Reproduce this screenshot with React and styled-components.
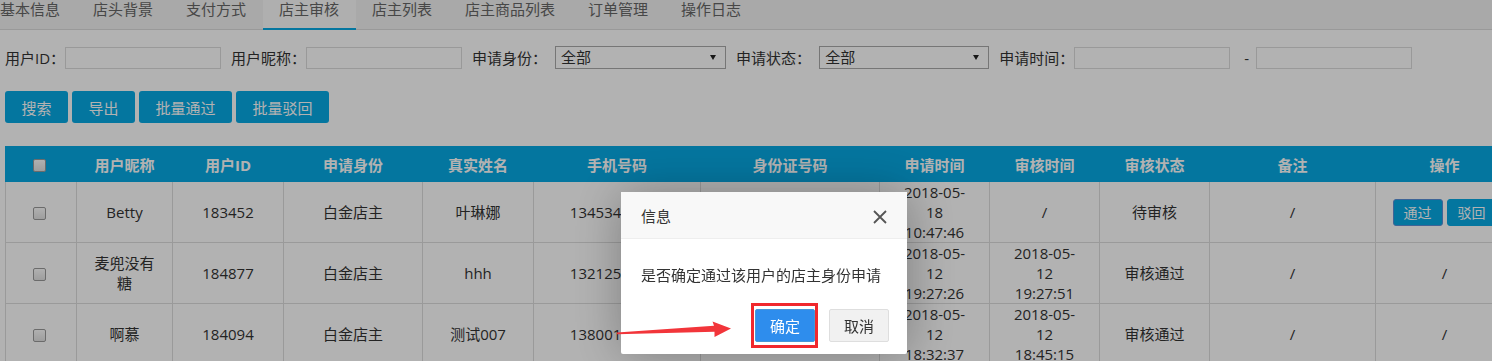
import React from 'react';
import styled, { createGlobalStyle } from 'styled-components';

const BLUE = '#07a9e4';
const FONT = '"Open Sans", "Noto Sans CJK SC", sans-serif';

const GlobalStyle = createGlobalStyle`
  html, body { margin: 0; padding: 0; background: #fff; overflow: hidden; }
  body { font-family: ${FONT}; font-size: 15px; color: #333; }
  * { box-sizing: border-box; }
`;

const Page = styled.div`
  width: 1492px;
  height: 361px;
  overflow: hidden;
  position: relative;
  background: #fff;
`;

const TabBar = styled.nav`
  display: flex;
  height: 30px;
  background: #f2f2f2;
  border-bottom: 1px solid #dcdcdc;
`;

const TabList = styled.ul`
  display: flex;
  align-items: flex-start;
  margin: 0 0 0 -16.5px;
  padding: 0;
  list-style: none;
`;

const Tab = styled.li`
  height: 30px;
  padding: 0 16.5px;
  line-height: 18px;
  font-size: 15px;
  color: #666;
  white-space: nowrap;
  background: ${(p) => (p.$active ? '#fbfbfb' : 'transparent')};
  border-bottom: 2px solid ${(p) => (p.$active ? BLUE : 'transparent')};
`;

const Main = styled.main`
  padding-left: 5px;
`;

const FilterRow = styled.div`
  display: flex;
  align-items: center;
  height: 23px;
  margin-top: 16px;
  gap: 10px;
`;

const Field = styled.div`
  display: flex;
  align-items: center;
`;

const FieldLabel = styled.span`
  font-size: 15px;
  color: #333;
  white-space: nowrap;
`;

const TextInput = styled.input`
  width: 156px;
  height: 22px;
  border: 1px solid #dcdcdc;
  background: #fff;
  padding: 0 4px;
  font: 15px ${FONT};
  outline: none;
`;

const SelectBox = styled.div`
  position: relative;
  width: ${(p) => p.$w}px;
  height: 23px;
  margin-left: 8px;
  border: 1px solid #a9a9a9;
  background: #fff;
  padding-left: 5px;
  line-height: 21px;
  font-size: 15px;
  color: #333;
  &::after {
    content: '';
    position: absolute;
    right: 9px;
    top: 8px;
    border-left: 3.5px solid transparent;
    border-right: 3.5px solid transparent;
    border-top: 5px solid #222;
  }
`;

const Dash = styled.span`
  margin: 0 7px 0 14px;
  color: #333;
`;

const ButtonRow = styled.div`
  display: flex;
  gap: 4px;
  margin-top: 22px;
`;

const ToolButton = styled.button`
  height: 32px;
  padding: 0 16.5px;
  border: none;
  border-radius: 3px;
  background: ${BLUE};
  color: #fff;
  font: 15px ${FONT};
`;

const Table = styled.table`
  margin-top: 23px;
  width: 1508px;
  table-layout: fixed;
  border-collapse: collapse;
  font-size: 15px;
`;

const Th = styled.th`
  height: 35px;
  padding: 0;
  background: ${BLUE};
  color: #fff;
  font-weight: bold;
  font-size: 15px;
  text-align: center;
  border: 1px solid ${BLUE};
  white-space: nowrap;
`;

const Td = styled.td`
  height: 60px;
  padding: 0 12px;
  text-align: center;
  vertical-align: middle;
  line-height: 20px;
  color: #333;
  border: 1px solid #dddddd;
  white-space: ${(p) => (p.$nowrap ? 'nowrap' : 'normal')};
  overflow: hidden;
`;

const CheckBox = styled.span`
  display: inline-block;
  width: 13px;
  height: 13px;
  vertical-align: middle;
  border: 1px solid #9a9a9a;
  border-radius: 2px;
  background: linear-gradient(#fdfdfd, #e2e2e2);
  margin-right: 3px;
`;

const DateLine = styled.span`
  display: block;
  white-space: nowrap;
`;

const ActionGroup = styled.div`
  display: flex;
  justify-content: center;
  gap: 4px;
`;

const RowButton = styled.button`
  height: 27px;
  padding: 0 10px;
  border-radius: 3px;
  border: 1px solid ${(p) => (p.$focus ? '#5a90d8' : BLUE)};
  background: ${BLUE};
  color: #fff;
  font: 14px ${FONT};
  white-space: nowrap;
`;

const Shade = styled.div`
  position: fixed;
  inset: 0;
  background: rgba(0, 0, 0, 0.3);
`;

const Dialog = styled.div`
  position: fixed;
  left: 621px;
  top: 192px;
  width: 286px;
  background: #fff;
  border-radius: 2px;
  box-shadow: 1px 1px 50px rgba(0, 0, 0, 0.3);
`;

const DialogTitle = styled.div`
  display: flex;
  align-items: center;
  justify-content: space-between;
  height: 47px;
  padding: 0 20px;
  background: #f8f8f8;
  border-bottom: 1px solid #eeeeee;
  font-size: 15px;
  color: #333;
`;

const CloseIcon = styled.svg`
  display: block;
  margin-top: 3px;
`;

const DialogBody = styled.div`
  padding: 24px 20px 0;
  line-height: 24px;
  font-size: 15px;
  color: #333;
  white-space: nowrap;
`;

const DialogActions = styled.div`
  display: flex;
  justify-content: flex-end;
  gap: 14px;
  padding: 22px 18px 12px;
`;

const DialogButton = styled.button`
  height: 33px;
  padding: 0 14px;
  border-radius: 2px;
  border: 1px solid ${(p) => (p.$primary ? '#4898d5' : '#dedede')};
  background: ${(p) => (p.$primary ? '#2e8ded' : '#f1f1f1')};
  color: ${(p) => (p.$primary ? '#fff' : '#333')};
  font: 15px ${FONT};
`;

const Highlight = styled.div`
  position: fixed;
  left: 751px;
  top: 303px;
  width: 67px;
  height: 45px;
  border: 3px solid #f0282d;
  pointer-events: none;
`;

const ArrowLayer = styled.svg`
  position: fixed;
  left: 0;
  top: 0;
  pointer-events: none;
`;

const tabs = ['基本信息', '店头背景', '支付方式', '店主审核', '店主列表', '店主商品列表', '订单管理', '操作日志'];
const headers = ['用户昵称', '用户ID', '申请身份', '真实姓名', '手机号码', '身份证号码', '申请时间', '审核时间', '审核状态', '备注', '操作'];
const colWidths = [71, 96, 111, 139, 111, 167, 179, 110, 110, 110, 166, 138];

const rows = [
  { nick: 'Betty', id: '183452', role: '白金店主', name: '叶琳娜', phone: '13453412876', card: '420119790605302X', apply: ['2018-05-', '18', '10:47:46'], review: null, status: '待审核', note: '/', pending: true },
  { nick: '麦兜没有糖', id: '184877', role: '白金店主', name: 'hhh', phone: '13212545678', card: '440106198802143516', apply: ['2018-05-', '12', '19:27:26'], review: ['2018-05-', '12', '19:27:51'], status: '审核通过', note: '/', pending: false },
  { nick: '啊慕', id: '184094', role: '白金店主', name: '测试007', phone: '13800138000', card: '110101199003074514', apply: ['2018-05-', '12', '18:32:37'], review: ['2018-05-', '12', '18:45:15'], status: '审核通过', note: '/', pending: false },
];

const DateCell = ({ lines }) =>
  lines ? lines.map((l, i) => <DateLine key={i}>{l}</DateLine>) : '/';

export default function App() {
  return (
    <Page>
      <GlobalStyle />
      <TabBar>
        <TabList>
          {tabs.map((t) => (
            <Tab key={t} $active={t === '店主审核'}>{t}</Tab>
          ))}
        </TabList>
      </TabBar>
      <Main>
        <FilterRow>
          <Field>
            <FieldLabel>用户ID：</FieldLabel>
            <TextInput />
          </Field>
          <Field>
            <FieldLabel>用户昵称：</FieldLabel>
            <TextInput />
          </Field>
          <Field>
            <FieldLabel>申请身份：</FieldLabel>
            <SelectBox $w={171}>全部</SelectBox>
          </Field>
          <Field>
            <FieldLabel>申请状态：</FieldLabel>
            <SelectBox $w={170}>全部</SelectBox>
          </Field>
          <Field>
            <FieldLabel>申请时间：</FieldLabel>
            <TextInput />
            <Dash>-</Dash>
            <TextInput />
          </Field>
        </FilterRow>
        <ButtonRow>
          <ToolButton>搜索</ToolButton>
          <ToolButton>导出</ToolButton>
          <ToolButton>批量通过</ToolButton>
          <ToolButton>批量驳回</ToolButton>
        </ButtonRow>
        <Table>
          <colgroup>
            {colWidths.map((w, i) => (
              <col key={i} style={{ width: w }} />
            ))}
          </colgroup>
          <thead>
            <tr>
              <Th><CheckBox /></Th>
              {headers.map((h) => (
                <Th key={h}>{h}</Th>
              ))}
            </tr>
          </thead>
          <tbody>
            {rows.map((r) => (
              <tr key={r.id}>
                <Td><CheckBox /></Td>
                <Td>{r.nick}</Td>
                <Td>{r.id}</Td>
                <Td>{r.role}</Td>
                <Td>{r.name}</Td>
                <Td $nowrap>{r.phone}</Td>
                <Td $nowrap>{r.card}</Td>
                <Td><DateCell lines={r.apply} /></Td>
                <Td><DateCell lines={r.review} /></Td>
                <Td>{r.status}</Td>
                <Td>{r.note}</Td>
                <Td $nowrap>
                  {r.pending ? (
                    <ActionGroup>
                      <RowButton $focus>通过</RowButton>
                      <RowButton>驳回</RowButton>
                    </ActionGroup>
                  ) : '/'}
                </Td>
              </tr>
            ))}
          </tbody>
        </Table>
      </Main>
      <Shade />
      <Dialog>
        <DialogTitle>
          <span>信息</span>
          <CloseIcon width="14" height="14" viewBox="0 0 14 14">
            <path d="M1 1 L13 13 M13 1 L1 13" stroke="#555" strokeWidth="1.8" fill="none" />
          </CloseIcon>
        </DialogTitle>
        <DialogBody>是否确定通过该用户的店主身份申请</DialogBody>
        <DialogActions>
          <DialogButton $primary>确定</DialogButton>
          <DialogButton>取消</DialogButton>
        </DialogActions>
      </Dialog>
      <Highlight />
      <ArrowLayer width="1492" height="361" viewBox="0 0 1492 361">
        <polygon
          points="617,332.6 714,325.8 712.5,321.5 731,328.6 714.5,337 714.5,331.8 617,334.2"
          fill="#f2353a"
        />
      </ArrowLayer>
    </Page>
  );
}
